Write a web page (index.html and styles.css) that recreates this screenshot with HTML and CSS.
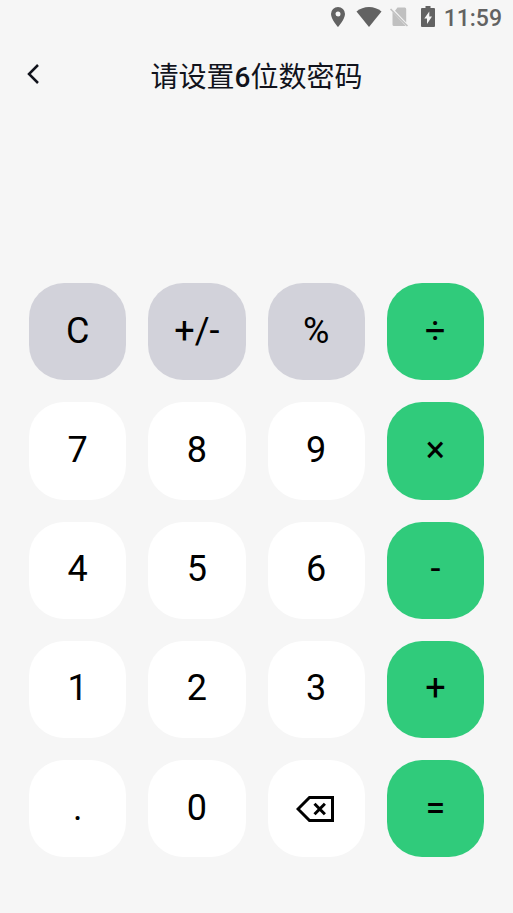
FILE: index.html
```html
<!DOCTYPE html>
<html lang="zh-CN">
<head>
<meta charset="utf-8">
<meta name="viewport" content="width=device-width, initial-scale=1">
<title>请设置6位数密码</title>
<link rel="stylesheet" href="styles.css">
</head>
<body>
<div class="status">
  <svg class="pin" width="14" height="20" viewBox="0 0 14 20"><path fill-rule="evenodd" d="M7 0a7 7 0 0 0-7 7c0 5.200 7 13 7 13s7-7.800 7-13a7 7 0 0 0-7-7zm0 4.500a2.500 2.500 0 1 1 0 5 2.500 2.500 0 0 1 0-5z"/></svg>
  <svg class="wifi" width="26" height="20" viewBox="0 0 26 20"><path d="M13 20 .5 4.500C4 1.700 8.300 0 13 0s9 1.700 12.500 4.500z"/></svg>
  <svg class="sim" width="18" height="20" viewBox="0 0 18 20"><path d="M7.500.5h7.200A1.500 1.500 0 0 1 16.200 2v13.500L5 3.800z"/><path d="M2.500 5 15.500 18.500q-.3.500-.9.500H4a1.500 1.500 0 0 1-1.500-1.500z"/><path d="m0 2.500 1.100-1.100L18 18.400l-1.100 1.100z"/></svg>
  <svg class="battery" width="14" height="21" viewBox="0 0 14 21"><path fill-rule="evenodd" d="M4.500 0h5v2H13a1 1 0 0 1 1 1v17a1 1 0 0 1-1 1H1a1 1 0 0 1-1-1V3a1 1 0 0 1 1-1h3.500zM8.300 5.500 3.300 12.500H6V18l5-7.500H8.300z"/></svg>
  <span class="time">11:59</span>
</div>
<header class="header">
  <button class="back" type="button" aria-label="返回"><svg width="14" height="20" viewBox="0 0 14 20"><path d="M12 1 3 10l9 9"/></svg></button>
  <h1 class="title">请设置<span class="count">6</span>位数密码</h1>
</header>
<main class="keypad">
  <button class="key gray" type="button">C</button>
  <button class="key gray" type="button">+/-</button>
  <button class="key gray" type="button">%</button>
  <button class="key green" type="button">÷</button>
  <button class="key" type="button">7</button>
  <button class="key" type="button">8</button>
  <button class="key" type="button">9</button>
  <button class="key green" type="button">×</button>
  <button class="key" type="button">4</button>
  <button class="key" type="button">5</button>
  <button class="key" type="button">6</button>
  <button class="key green" type="button">-</button>
  <button class="key" type="button">1</button>
  <button class="key" type="button">2</button>
  <button class="key" type="button">3</button>
  <button class="key green" type="button">+</button>
  <button class="key" type="button">.</button>
  <button class="key" type="button">0</button>
  <button class="key" type="button" aria-label="删除"><svg class="erase" width="40" height="28" viewBox="0 0 40 28"><path d="M13.500 3.500h23v23h-23L2 15z"/><path d="m18.500 9.800 10.400 10.400m0-10.400L18.500 20.200"/></svg></button>
  <button class="key green" type="button">=</button>
</main>
</body>
</html>
```
FILE: styles.css
```css
* {
  box-sizing: border-box;
}

body {
  margin: 0;
  min-height: 100vh;
  background: #f6f6f6;
  color: #000;
  font-family: Roboto, "Noto Sans CJK SC", sans-serif;
}

button {
  padding: 0;
  border: 0;
  color: inherit;
  font-family: inherit;
  cursor: pointer;
}

.status {
  display: flex;
  align-items: flex-end;
  justify-content: flex-end;
  height: 34px;
  padding: 0 11px 7px 0;
  color: #626262;
}

.status svg {
  flex: none;
  fill: currentColor;
}

.wifi {
  margin-left: 11px;
}

.status .sim {
  margin-left: 8px;
  fill: #c0c0c0;
}

.battery {
  margin-left: 13px;
}

.time {
  margin-left: 9px;
  font-size: 23px;
  font-weight: 500;
  line-height: 16px;
}

.header {
  display: grid;
  grid-template-columns: 56px 1fr 56px;
  align-items: center;
  height: 84px;
  padding-top: 4px;
  color: #11131c;
}

.back {
  display: flex;
  align-items: center;
  height: 56px;
  margin-bottom: 8px;
  padding-left: 26px;
  background: none;
}

.back svg {
  fill: none;
  stroke: #11131c;
  stroke-width: 2.5;
}

.title {
  margin: 0;
  font-size: 28px;
  font-weight: 400;
  line-height: 40px;
  text-align: center;
}

.count {
  font-weight: 500;
}

.keypad {
  display: grid;
  grid-template-columns: repeat(4, 1fr);
  gap: 22px;
  padding: 165px 29px 56px;
}

.key {
  display: flex;
  align-items: center;
  justify-content: center;
  aspect-ratio: 1;
  padding-bottom: 2px;
  border-radius: 35px;
  background: #fff;
  font-size: 36px;
  line-height: 44px;
}

.gray {
  background: #d2d2da;
}

.green {
  background: #30cb7b;
}

.erase {
  fill: none;
  stroke: #000;
  stroke-width: 3;
}
```
